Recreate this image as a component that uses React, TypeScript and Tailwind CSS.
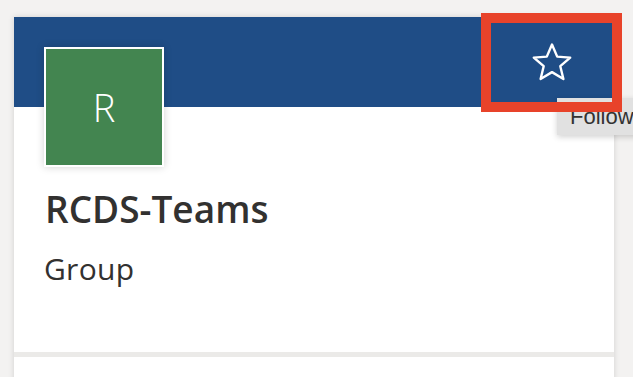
import React from 'react';

function StarIcon() {
    return (
        <svg width="42" height="40" viewBox="0 0 42 40" fill="none">
            <path
                d="M21 2.5 L26.2 14.6 L39.2 15.6 L29.3 24.2 L32.4 37 L21 30.1 L9.6 37 L12.7 24.2 L2.8 15.6 L15.8 14.6 Z"
                stroke="#ffffff"
                strokeWidth="2.4"
                strokeLinejoin="round"
            />
        </svg>
    );
}

export default function App() {
    return (
        <div
            className="relative w-[633px] h-[377px] overflow-hidden bg-[#f3f2f1] pt-[17px] pl-[14px]"
            style={{ fontFamily: '"Open Sans", "Noto Sans", sans-serif' }}
        >
            <div className="w-[600px] h-[400px] flex flex-col bg-white shadow-[0_0_6px_rgba(0,0,0,0.14)]">
                {/* header */}
                <div className="h-[90px] shrink-0 bg-[#1f4d86] flex justify-end">
                    <button className="w-[121px] h-full mr-[2px] flex items-center justify-center">
                        <StarIcon />
                    </button>
                </div>

                {/* body */}
                <div className="h-[245px] shrink-0 pl-[30px]">
                    <div className="-mt-[60px] w-[120px] h-[120px] border-2 border-white bg-[#438550] shadow-[0_0_8px_rgba(0,0,0,0.18)] flex items-center justify-center">
                        <span className="text-[38px] font-light text-white leading-none">R</span>
                    </div>
                    <h1 className="mt-[18px] pl-[1px] text-[37px] font-semibold leading-[48px] text-[#323130]">
                        RCDS-Teams
                    </h1>
                    <p className="mt-[18px] text-[30px] leading-[36px] text-[#323130] tracking-[0.3px]">Group</p>
                </div>

                <div className="h-[5px] shrink-0 bg-[#ebeae8]" />
                <div className="flex-1 bg-white" />
            </div>

            {/* tooltip */}
            <div className="absolute left-[557px] top-[98px] h-[37px] w-[100px] bg-[#e1e1e1] shadow-[0_2px_6px_rgba(0,0,0,0.18)] pl-[13px] flex items-center">
                <span className="text-[22px] text-[#333333] leading-none" style={{ fontFamily: '"Liberation Sans", Arial, sans-serif' }}>
                    Follow
                </span>
            </div>

            {/* highlight box */}
            <div className="absolute left-[481px] top-[13px] w-[141px] h-[99px] border-[10px] border-[#e8432a]" />
        </div>
    );
}
